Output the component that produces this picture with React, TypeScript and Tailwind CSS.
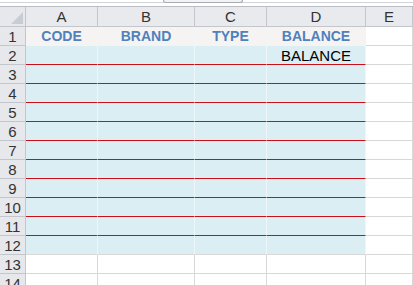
import React from "react";

const cols = ["A", "B", "C", "D", "E"];
const widths = ["w-[72px]", "w-[97px]", "w-[72px]", "w-[99px]", "flex-1"];

function Row({ n }: { n: number }) {
  const filled = n >= 1 && n <= 12;
  const redBottom = n >= 2 && n <= 11;
  return (
    <div className="flex h-[19px]">
      <div className="w-[26px] shrink-0 bg-[#e6e8ec] border-r border-b border-r-[#c3c7cd] border-b-[#c3c7cd] flex items-center justify-center text-[15px] text-[#333] leading-none">
        {n}
      </div>
      {cols.map((c, i) => {
        const inBlock = filled && i < 4;
        let bg = "bg-white";
        if (inBlock) bg = n === 1 ? "bg-[#f6f4f3]" : "bg-[#dbeef3]";
        let bb = "border-b border-b-[#d8d8d8]";
        if (inBlock) {
          if (redBottom) bb = "border-b border-b-[#c8101a]";
          else if (n === 12) bb = "border-b border-b-[#d8d8d8]";
          else bb = "border-b border-b-transparent";
        }
        const br = inBlock ? "border-r border-r-[#eef6f8]" : "border-r border-r-[#d8d8d8]";
        let content: React.ReactNode = null;
        if (n === 1 && i < 4) {
          content = (
            <span className="font-bold text-[14px] text-[#4f81bd] leading-none">
              {["CODE", "BRAND", "TYPE", "BALANCE"][i]}
            </span>
          );
        }
        if (n === 2 && i === 3) {
          content = <span className="text-[15px] text-black leading-none">BALANCE</span>;
        }
        return (
          <div
            key={c}
            className={`${widths[i]} shrink-0 ${bg} ${bb} ${br} flex items-center justify-center`}
          >
            {content}
          </div>
        );
      })}
    </div>
  );
}

export default function App() {
  const rows = Array.from({ length: 14 }, (_, i) => i + 1);
  return (
    <div
      className="w-[413px] h-[285px] overflow-hidden bg-white"
      style={{ fontFamily: '"Liberation Sans", Arial, sans-serif' }}
    >
      <div className="h-[7px] relative border-b border-b-[#b9bdc3] bg-white">
        <div className="absolute top-[2px] left-0 right-0 h-px bg-[#d0d3d8]" />
        <div className="absolute top-0 left-[163px] w-[80px] h-[3px] border-b border-l border-r border-[#a8acb2] rounded-b-[3px] bg-[#f3f4f6]" />
      </div>
      <div className="flex h-[20px]">
        <div className="w-[26px] shrink-0 bg-[#e6e8ec] border-r border-b border-r-[#c3c7cd] border-b-[#c3c7cd] relative">
          <svg className="absolute right-[2px] bottom-[2px]" width="12" height="12" viewBox="0 0 12 12">
            <polygon points="12,0 12,12 0,12" fill="#c9ccd1" />
          </svg>
        </div>
        {cols.map((c, i) => (
          <div
            key={c}
            className={`${widths[i]} shrink-0 bg-[#e8eaed] border-r border-b border-r-[#c3c7cd] border-b-[#c3c7cd] flex items-center justify-center text-[15px] text-[#333] leading-none`}
          >
            {c}
          </div>
        ))}
      </div>
      {rows.map((n) => (
        <Row key={n} n={n} />
      ))}
    </div>
  );
}
